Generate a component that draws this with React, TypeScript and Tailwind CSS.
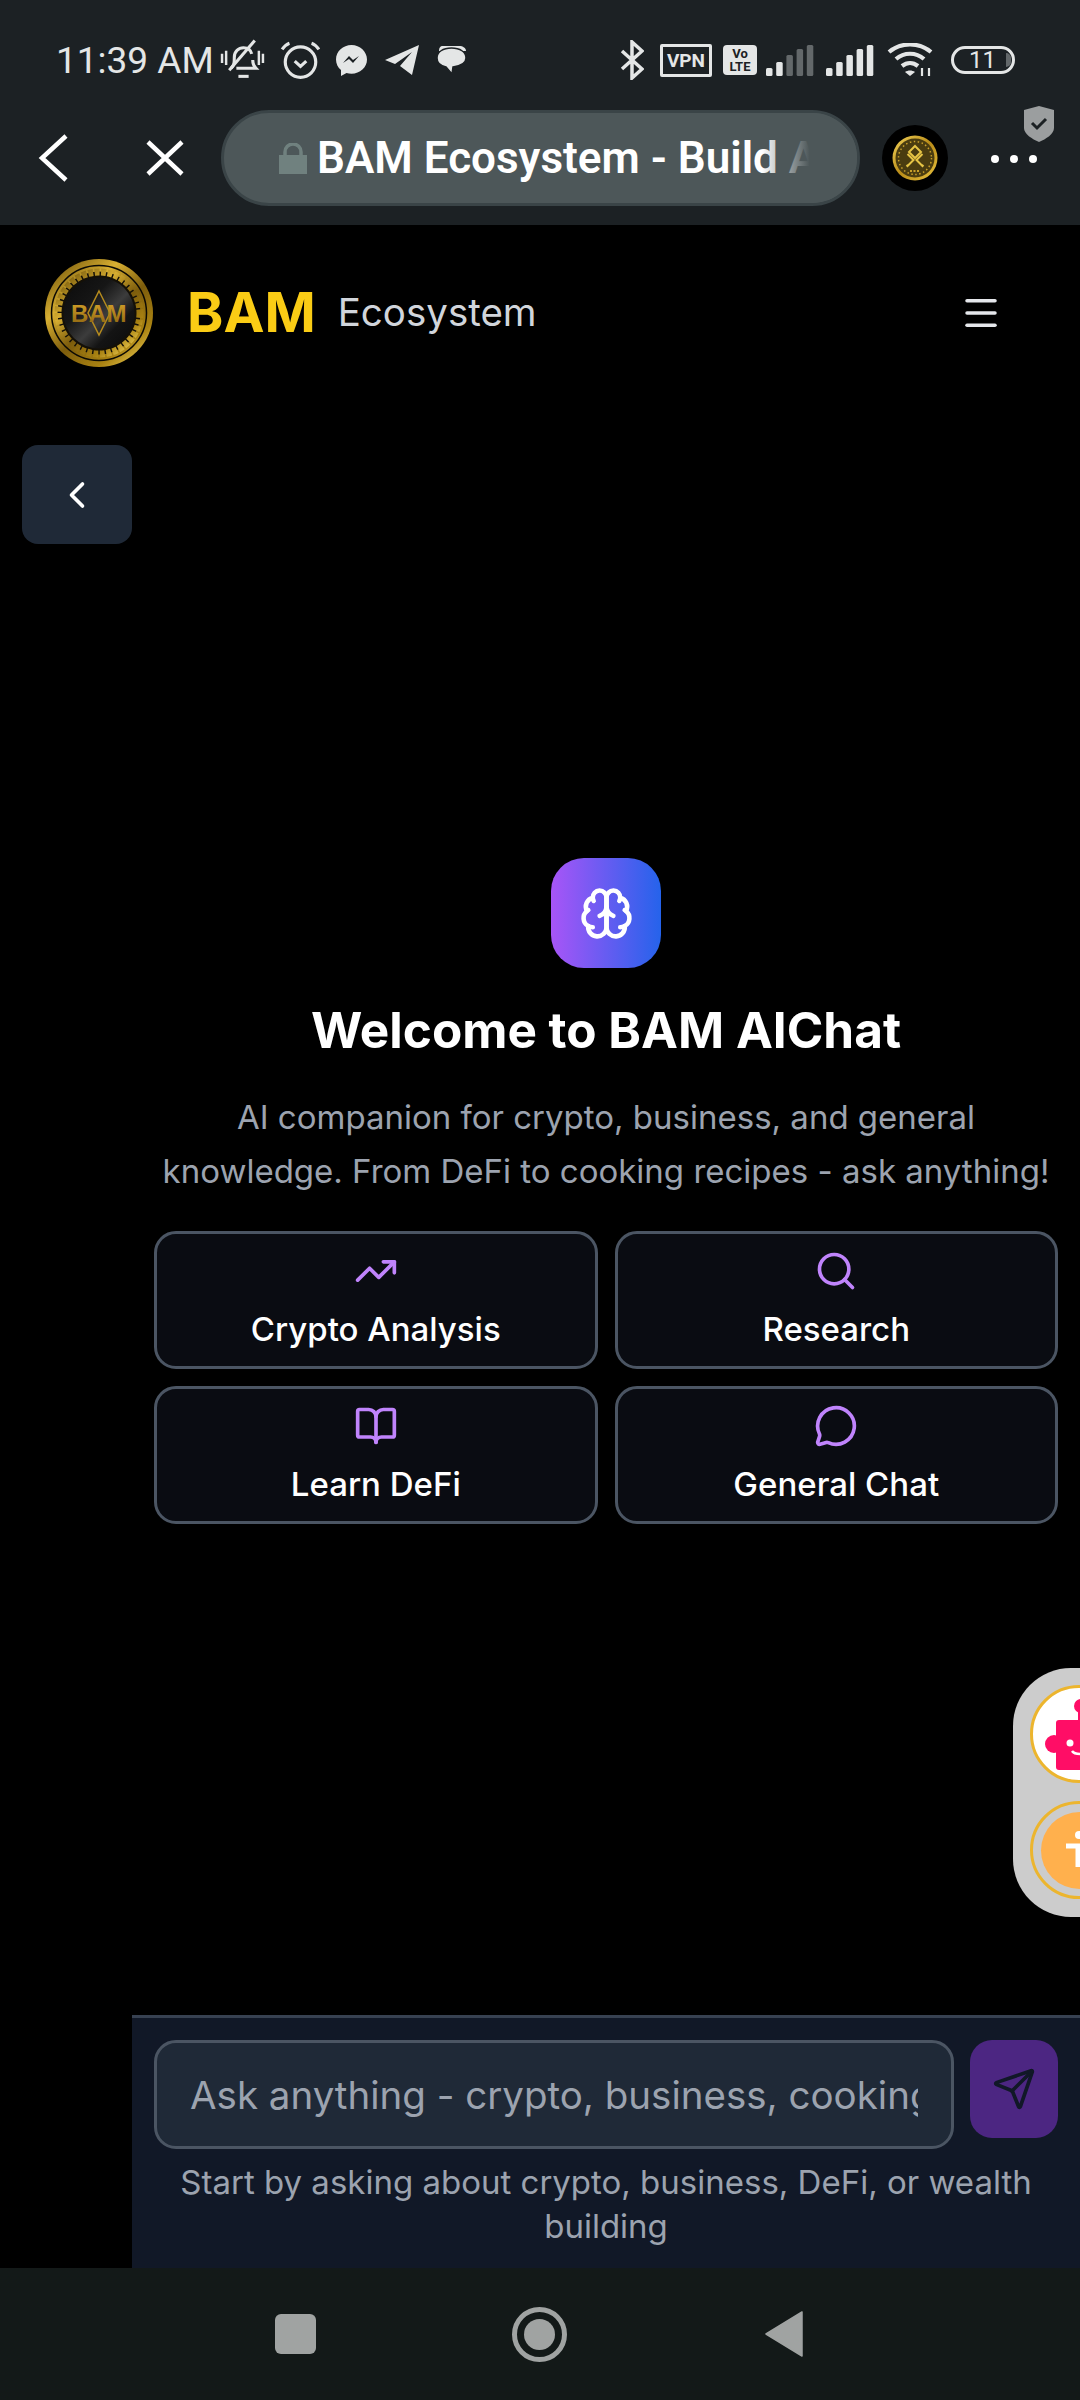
import { BookOpen, ChevronLeft, Menu, MessageCircle, Search, Send, TrendingUp } from "lucide-react";

function BellOff() {
  return (
    <svg width="45" height="42" viewBox="0 0 44 40" fill="none" stroke="#e4e6e6" strokeWidth="3">
      <path d="M11 28c3-3 3-6 3-11 0-5 4-9 9-9 4 0 7 2 8 6M32 20c0 4 1 6 3 8H16" />
      <path d="M9 30 34 1" />
      <path d="M2 14v9M6 11v14M38 11v14M42 14v9" strokeWidth="2.4" />
      <path d="M18 36h10" strokeWidth="3" />
    </svg>
  );
}
function Alarm() {
  return (
    <svg width="41" height="40" viewBox="0 0 39 38" fill="none" stroke="#e4e6e6" strokeWidth="3">
      <circle cx="19.5" cy="21" r="14.5" />
      <path d="M14 20l5.5 5 5.5-5" strokeWidth="3" />
      <path d="M2 9c2-3 4-5 7-6M37 9c-2-3-4-5-7-6" />
    </svg>
  );
}
function Messenger() {
  return (
    <svg width="31" height="31" viewBox="0 0 31 31">
      <path d="M15.500 0C7 0 0 6.400 0 14.500c0 4.300 1.900 8 5 10.600V31l5.500-3c1.600.5 3.300.7 5 .7 8.500 0 15.500-6.300 15.500-14.200S24 0 15.500 0z" fill="#e4e6e6" />
      <path d="M7 18l6-7 4 4 6-4-6 7-4-4z" fill="#1c2124" />
    </svg>
  );
}
function Telegram() {
  return (
    <svg width="34" height="30" viewBox="0 0 34 30">
      <path d="M34 0 0 15l10 4L27 7 15 21v0l12 9z" fill="#e4e6e6" />
    </svg>
  );
}
function ChatIcon() {
  return (
    <svg width="29" height="30" viewBox="0 0 29 30">
      <path d="M6 1h16c4 0 7 2 7 5H2c0-3 1-5 4-5z" fill="#e4e6e6" />
      <path d="M14.500 3C6 3 0 7 0 13c0 5 4 8 9 9l6 7 1-7c7-1 13-4 13-9 0-6-6-10-14.500-10z" fill="#e4e6e6" stroke="#1c2124" strokeWidth="1.500" />
    </svg>
  );
}
function Bluetooth() {
  return (
    <svg width="24" height="40" viewBox="0 0 24 40" fill="none" stroke="#e4e6e6" strokeWidth="3.500">
      <path d="M2 11l20 18-10 9V2l10 9L2 29" />
    </svg>
  );
}
function Signal({ dim }: { dim?: boolean }) {
  const bars = [8, 14, 21, 27, 31];
  return (
    <svg width="48" height="32" viewBox="0 0 48 32">
      {bars.map((h, i) => (
        <rect key={i} x={i * 10.200} y={32 - h} width="6.500" height={h} rx="1.500" fill={dim && i > 1 ? "#63686a" : "#e4e6e6"} />
      ))}
    </svg>
  );
}
function Wifi() {
  return (
    <svg width="48" height="34" viewBox="0 0 48 34" fill="none" stroke="#e4e6e6" strokeWidth="4.200">
      <path d="M2 9c12-10 30-10 42 0M9 16c8-7 20-7 28 0M15 23c5-4 11-4 16 0" />
      <path d="M23 33l-5-4c3-2 7-2 10 0z" fill="#e4e6e6" stroke="none" />
      <path d="M35 33v-8M42 33v-8" strokeWidth="2.200" />
    </svg>
  );
}
function Shield() {
  return (
    <svg width="30" height="36" viewBox="0 0 30 36">
      <path d="M15 0 30 4v18c0 6-8 11-15 14C8 33 0 28 0 22V4z" fill="#9b9e9f" />
      <path d="M8 17l5 5 9-9" fill="none" stroke="#1c2124" strokeWidth="3" />
    </svg>
  );
}
function BrainIcon() {
  return (
    <svg width="55" height="55" viewBox="0 0 24 24" fill="none" stroke="#ffffff" strokeWidth="2" strokeLinecap="round" strokeLinejoin="round">
      <path d="M12 5a3 3 0 1 0-5.997.125 4 4 0 0 0-2.526 5.770 4 4 0 0 0 .556 6.588A4 4 0 1 0 12 18Z" />
      <path d="M12 5a3 3 0 1 1 5.997.125 4 4 0 0 1 2.526 5.770 4 4 0 0 1-.556 6.588A4 4 0 1 1 12 18Z" />
      <path d="M15 13a4.500 4.500 0 0 1-3-4 4.500 4.500 0 0 1-3 4" />
      <path d="M17.599 6.500a3 3 0 0 0 .399-1.375" />
      <path d="M6.003 5.125A3 3 0 0 0 6.401 6.500" />
      <path d="M3.477 10.896a4 4 0 0 1 .585-.396" />
      <path d="M19.938 10.500a4 4 0 0 1 .585.396" />
      <path d="M6 18a4 4 0 0 1-1.967-.516" />
      <path d="M19.967 17.484A4 4 0 0 1 18 18" />
    </svg>
  );
}
function SmallCoin() {
  return (
    <svg width="46" height="46" viewBox="0 0 46 46">
      <defs>
        <linearGradient id="scr" x1="0" y1="0" x2="1" y2="1">
          <stop offset="0" stopColor="#f3d35a" />
          <stop offset="0.500" stopColor="#b98c18" />
          <stop offset="1" stopColor="#eac340" />
        </linearGradient>
      </defs>
      <circle cx="23" cy="23" r="22.500" fill="url(#scr)" />
      <circle cx="23" cy="23" r="19.500" fill="#4a3c10" />
      <circle cx="23" cy="23" r="16.500" fill="none" stroke="#c9a02a" strokeWidth="1.500" strokeDasharray="1.500 2.500" />
      <path d="M23 11l6 6-6 6-6-6zM15.500 19l6 6-6 6-1-1M30.500 19l-6 6 6 6 1-1" fill="none" stroke="#e6c445" strokeWidth="2" />
      <path d="M18 36h10" stroke="#c9a02a" strokeWidth="2" strokeDasharray="2 1.500" />
    </svg>
  );
}
function Coin() {
  return (
    <svg width="110" height="110" viewBox="0 0 110 110">
      <defs>
        <linearGradient id="gold" x1="0.100" y1="0" x2="0.900" y2="1">
          <stop offset="0" stopColor="#6f5309" />
          <stop offset="0.300" stopColor="#d8af32" />
          <stop offset="0.550" stopColor="#7c5c0c" />
          <stop offset="0.800" stopColor="#a98212" />
          <stop offset="1" stopColor="#f2d35a" />
        </linearGradient>
        <linearGradient id="dark" x1="0" y1="0" x2="1" y2="1">
          <stop offset="0" stopColor="#0a0a0a" />
          <stop offset="0.350" stopColor="#161616" />
          <stop offset="0.560" stopColor="#3c3c3c" />
          <stop offset="0.720" stopColor="#141414" />
          <stop offset="1" stopColor="#0a0a0a" />
        </linearGradient>
        <linearGradient id="txt" x1="0" y1="0" x2="0" y2="1">
          <stop offset="0" stopColor="#d8a52a" />
          <stop offset="1" stopColor="#8a6210" />
        </linearGradient>
      </defs>
      <circle cx="55" cy="55" r="54" fill="url(#gold)" />
      <circle cx="55" cy="55" r="47.500" fill="none" stroke="#0c0a04" strokeWidth="1.500" />
      <circle cx="55" cy="55" r="41.500" fill="#141007" />
      <circle cx="55" cy="55" r="41" fill="none" stroke="url(#gold)" strokeWidth="7" strokeDasharray="5 1.500" />
      <circle cx="55" cy="55" r="35.500" fill="url(#dark)" />
      <path d="M55 33 66 55 55 77 44 55z" fill="none" stroke="#b48a1e" strokeWidth="1.500" />
      <text x="55" y="64" textAnchor="middle" fontFamily="'Liberation Sans', sans-serif" fontWeight="700" fontSize="24" fill="url(#txt)" letterSpacing="0.500">BAM</text>
    </svg>
  );
}

const cards = [
  { label: "Crypto Analysis", Icon: TrendingUp },
  { label: "Research", Icon: Search },
  { label: "Learn DeFi", Icon: BookOpen },
  { label: "General Chat", Icon: MessageCircle },
];

export default function App() {
  return (
    <div className="w-[1080px] h-[2400px] flex flex-col bg-black overflow-hidden font-['Inter',sans-serif]">
      <div className="relative bg-[#1c2124] shrink-0 font-['Roboto',sans-serif]">
        <div className="h-[100px] pt-[20px] pl-[56px] pr-[65px] flex items-center justify-between text-[#e4e6e6]">
          <div className="flex items-center">
            <span className="text-[37px] mr-[6px] leading-none">11:39 AM</span>
            <BellOff />
            <span className="w-[15px]" />
            <Alarm />
            <span className="w-[15px]" />
            <Messenger />
            <span className="w-[18px]" />
            <Telegram />
            <span className="w-[18px]" />
            <ChatIcon />
          </div>
          <div className="flex items-center">
            <Bluetooth />
            <span className="ml-[16px] w-[52px] h-[33px] border-[3px] border-[#e4e6e6] rounded-[2px] flex items-center justify-center text-[19px] font-bold leading-none">VPN</span>
            <span className="ml-[11px] w-[34px] h-[30px] bg-[#e4e6e6] rounded-[4px] flex flex-col items-center justify-center text-[#1c2124] text-[13px] font-bold leading-[13px]">
              <span>Vo</span>
              <span>LTE</span>
            </span>
            <span className="ml-[9px] flex"><Signal dim /></span>
            <span className="ml-[12px] flex"><Signal /></span>
            <span className="ml-[13px] flex"><Wifi /></span>
            <span className="ml-[16px] w-[64px] h-[28px] border-[3px] border-[#e4e6e6] rounded-full flex items-center text-[24px] leading-none pl-[15px] gap-[10px]">
              <span>11</span>
              <span className="w-[5px] h-[14px] bg-[#63686a] rounded-r-full" />
            </span>
          </div>
        </div>
        <div className="h-[125px] pb-[9px] pl-[38px] flex items-center">
          <svg width="31" height="48" viewBox="0 0 31 48" fill="none" stroke="#ffffff" strokeWidth="4.500" className="shrink-0">
            <path d="M28 2 4 24l24 22" />
          </svg>
          <svg width="38" height="36" viewBox="0 0 38 36" fill="none" stroke="#ffffff" strokeWidth="4.500" className="ml-[77px] shrink-0">
            <path d="M2 2l34 32M36 2 2 34" />
          </svg>
          <div className="relative ml-[37px] w-[639px] h-[96px] rounded-full bg-[#4d5759] border-[3px] border-[#3a4447] flex items-center pl-[55px] overflow-hidden shrink-0">
            <svg width="28" height="31" viewBox="0 0 28 31" className="shrink-0">
              <path d="M6 13V9a8 8 0 0 1 16 0v4" fill="none" stroke="#70817f" strokeWidth="3.500" />
              <rect x="0" y="12" width="28" height="19" fill="#70817f" />
            </svg>
            <span className="ml-[10px] text-[44px] font-semibold text-white whitespace-nowrap leading-none">BAM Ecosystem - Build AI</span>
            <span className="absolute top-0 bottom-0 right-0 w-[95px] bg-[linear-gradient(to_right,rgba(77,87,89,0)_0%,#4d5759_50%)]" />
          </div>
          <span className="ml-[22px] w-[66px] h-[66px] rounded-full bg-black flex items-center justify-center shrink-0">
            <SmallCoin />
          </span>
          <div className="ml-[43px] flex gap-[11px] mt-[2px] shrink-0">
            <span className="w-[8px] h-[8px] rounded-full bg-white" />
            <span className="w-[8px] h-[8px] rounded-full bg-white" />
            <span className="w-[8px] h-[8px] rounded-full bg-white" />
          </div>
        </div>
        <div className="absolute top-[106px] right-[26px]"><Shield /></div>
      </div>

      <div className="relative flex-1 flex flex-col min-h-0">
        <div className="h-[175px] pl-[44px] pr-[78px] flex items-center shrink-0">
          <Coin />
          <span className="ml-[33px] text-[55px] font-bold text-[#facc15] leading-none">BAM</span>
          <span className="ml-[22px] text-[38.5px] text-[#d1d5db] leading-none">Ecosystem</span>
          <Menu size={42} color="#e5e7eb" className="ml-auto" />
        </div>

        <div className="flex-1 flex min-h-0">
          <div className="w-[132px] shrink-0 pl-[22px] pt-[45px]">
            <div className="w-[110px] h-[99px] bg-[#1f2937] rounded-[16px] flex items-center justify-center">
              <ChevronLeft size={44} color="#ffffff" strokeWidth={2} />
            </div>
          </div>

          <div className="flex-1 flex flex-col min-w-0">
            <div className="flex-1 flex flex-col items-center justify-center px-[22px] pb-[33px]">
              <div className="w-[110px] h-[110px] rounded-[33px] bg-[linear-gradient(to_right,#a855f7,#2563eb)] flex items-center justify-center">
                <BrainIcon />
              </div>
              <h1 className="mt-[29px] text-[49.500px] leading-[66px] font-bold text-white text-center">Welcome to BAM AIChat</h1>
              <p className="mt-[27px] text-[33px] leading-[54px] text-[#9ca3af] text-center">
                AI companion for crypto, business, and general knowledge. From DeFi to cooking recipes - ask anything!
              </p>
              <div className="mt-[33px] w-full grid grid-cols-2 gap-[17px]">
                {cards.map(({ label, Icon }) => (
                  <div key={label} className="h-[138px] rounded-[22px] border-[3px] border-[#4b5563] bg-[#0a0c12] flex flex-col items-center justify-center gap-[14px]">
                    <Icon size={44} color="#c084fc" strokeWidth={2} />
                    <span className="text-[33px] leading-[44px] font-medium text-white">{label}</span>
                  </div>
                ))}
              </div>
            </div>

            <div className="h-[253px] shrink-0 bg-[#111827] border-t-[3px] border-[#374151] px-[22px] pt-[22px]">
              <div className="flex items-start gap-[16px]">
                <input
                  readOnly
                  placeholder="Ask anything - crypto, business, cooking, recipes"
                  className="flex-1 min-w-0 h-[109px] rounded-[22px] bg-[#1f2937] border-[3px] border-[#4b5563] px-[33px] text-[38.500px] outline-none placeholder:text-[#9ca3af]"
                />
                <div className="w-[88px] h-[98px] rounded-[22px] bg-[#4c2682] flex items-center justify-center shrink-0">
                  <Send size={44} color="#111827" strokeWidth={2} />
                </div>
              </div>
              <p className="mt-[11px] text-[33px] leading-[44px] text-[#9ca3af] text-center">
                Start by asking about crypto, business, DeFi, or wealth building
              </p>
            </div>
          </div>
        </div>

        <div className="absolute right-0 top-[1443px] w-[67px] h-[249px] bg-[#cccccc] rounded-l-[58px] overflow-hidden pl-[17px] pt-[17px] flex flex-col gap-[18px]">
          <div className="w-[98px] h-[98px] shrink-0 rounded-full border-[3px] border-[#ecb52e] bg-white overflow-hidden">
            <svg width="92" height="92" viewBox="0 0 92 92">
              <circle cx="21" cy="56" r="9" fill="#ff0d66" />
              <circle cx="48" cy="18" r="7" fill="#ff0d66" />
              <rect x="45" y="20" width="6" height="14" fill="#ff0d66" />
              <rect x="23" y="32" width="70" height="50" rx="3" fill="#ff0d66" />
              <circle cx="37" cy="55" r="3.500" fill="#ffffff" />
              <path d="M39 63c2 3 5 3 8 3" fill="none" stroke="#ffffff" strokeWidth="2.500" />
            </svg>
          </div>
          <div className="w-[98px] h-[98px] shrink-0 rounded-full border-[3px] border-[#ecb52e] flex items-center justify-center">
            <div className="w-[77px] h-[77px] rounded-full bg-[#ffb04d] overflow-hidden">
              <svg width="77" height="77" viewBox="0 0 77 77">
                <circle cx="38" cy="23" r="4" fill="#ffffff" />
                <path d="M25 34h34M37 34v21" stroke="#ffffff" strokeWidth="5" fill="none" />
              </svg>
            </div>
          </div>
        </div>
      </div>

      <div className="h-[132px] shrink-0 bg-[#131918] relative flex items-center">
        <span className="ml-[275px] w-[41px] h-[40px] rounded-[6px] bg-[#a0a3a2]" />
        <span className="ml-[196px] w-[55px] h-[55px] rounded-full border-[5px] border-[#a0a3a2] flex items-center justify-center">
          <span className="w-[31px] h-[31px] rounded-full bg-[#a0a3a2]" />
        </span>
        <svg width="38" height="46" viewBox="0 0 38 46" className="ml-[198px]">
          <path d="M37 1v44L1 23z" fill="#a0a3a2" stroke="#a0a3a2" strokeWidth="1.500" strokeLinejoin="round" />
        </svg>
      </div>
    </div>
  );
}
